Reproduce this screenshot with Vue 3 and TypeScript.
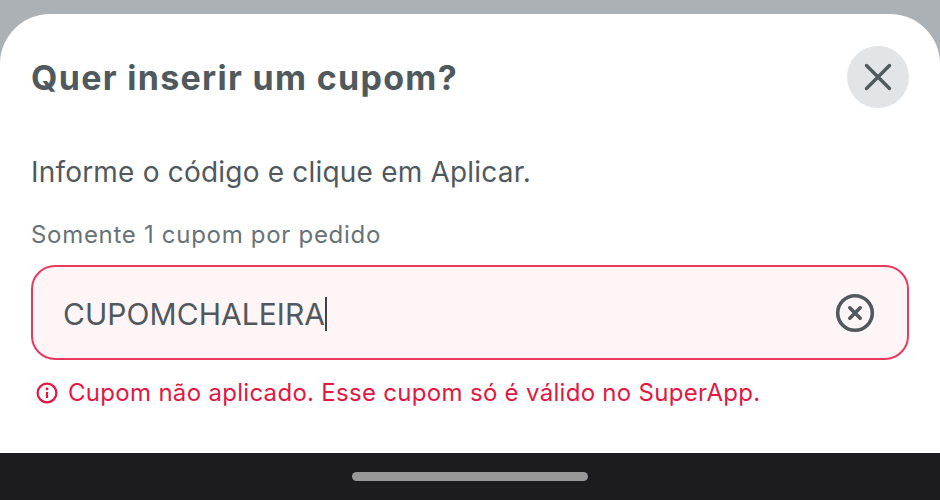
<script setup lang="ts">
const code: string = 'CUPOMCHALEIRA'
</script>

<template>
  <div class="screen">
    <section class="sheet">
      <header class="head">
        <h1 class="title">Quer inserir um cupom?</h1>
        <button class="close" type="button" aria-label="Fechar">
          <svg width="28" height="28" viewBox="0 0 28 28" fill="none">
            <path d="M2.5 2.5L25.5 25.5M25.5 2.5L2.5 25.5" stroke="#50595e" stroke-width="3.4" stroke-linecap="round" />
          </svg>
        </button>
      </header>
      <p class="lead">Informe o código e clique em Aplicar.</p>
      <p class="hint">Somente 1 cupom por pedido</p>
      <div class="field">
        <span class="value">{{ code }}</span><span class="caret"></span>
        <svg class="clear" width="40" height="40" viewBox="0 0 40 40" fill="none">
          <circle cx="20" cy="20" r="17.3" stroke="#50595e" stroke-width="3.6" />
          <path d="M14.8 14.8L25.2 25.2M25.2 14.8L14.8 25.2" stroke="#50595e" stroke-width="3.6" stroke-linecap="round" />
        </svg>
      </div>
      <div class="error">
        <svg width="22" height="22" viewBox="0 0 22 22" fill="none">
          <circle cx="11" cy="11" r="9.4" stroke="#e31743" stroke-width="2.2" />
          <path d="M11 10V16" stroke="#e31743" stroke-width="2.2" />
          <circle cx="11" cy="6.9" r="1.4" fill="#e31743" />
        </svg>
        <span>Cupom não aplicado. Esse cupom só é válido no SuperApp.</span>
      </div>
    </section>
    <footer class="nav"><span class="pill"></span></footer>
  </div>
</template>

<style>
html, body { margin: 0; background: #abb1b5; }
</style>

<style scoped>
.screen {
  width: 940px;
  height: 500px;
  display: flex;
  flex-direction: column;
  padding-top: 14px;
  box-sizing: border-box;
  overflow: hidden;
  background: #abb1b5;
  font-family: Inter, "Noto Sans", sans-serif;
}
.sheet {
  flex: 1;
  background: #fff;
  border-radius: 50px 50px 0 0;
  padding: 32px 31px 0;
  box-sizing: border-box;
}
.head {
  display: flex;
  justify-content: space-between;
  align-items: center;
  height: 62px;
}
.title {
  margin: 0;
  font-size: 34px;
  font-weight: 700;
  color: #50595e;
  letter-spacing: 1.3px;
}
.close {
  width: 62px;
  height: 62px;
  border: 0;
  padding: 0;
  border-radius: 50%;
  background: #e1e5e7;
  display: flex;
  align-items: center;
  justify-content: center;
}
.lead {
  margin: 47px 0 0;
  font-size: 28px;
  line-height: 34px;
  color: #50595e;
  letter-spacing: 0.2px;
}
.hint {
  margin: 31px 0 0;
  font-size: 24px;
  line-height: 30px;
  color: #697277;
  letter-spacing: 0.7px;
}
.field {
  margin-top: 15px;
  height: 95px;
  box-sizing: border-box;
  border: 2px solid #e9395e;
  border-radius: 24px;
  background: #fff5f6;
  display: flex;
  align-items: center;
  padding: 0 32px 0 30px;
  color: #50595e;
  font-size: 30px;
}
.value {
  letter-spacing: 0.05px;
  padding-top: 3px;
}
.caret {
  width: 1.5px;
  height: 34px;
  margin-top: 3px;
  background: #3c4448;
}
.clear { margin-left: auto; }
.error {
  margin: 19px 0 0 5px;
  display: flex;
  align-items: center;
  gap: 10px;
  color: #e31743;
  font-size: 24px;
  line-height: 28px;
  letter-spacing: 0.3px;
}
.nav {
  height: 47px;
  background: #1c1b20;
  display: flex;
  justify-content: center;
  padding-top: 19px;
  box-sizing: border-box;
}
.pill {
  width: 236px;
  height: 9px;
  border-radius: 5px;
  background: #989898;
}
</style>
